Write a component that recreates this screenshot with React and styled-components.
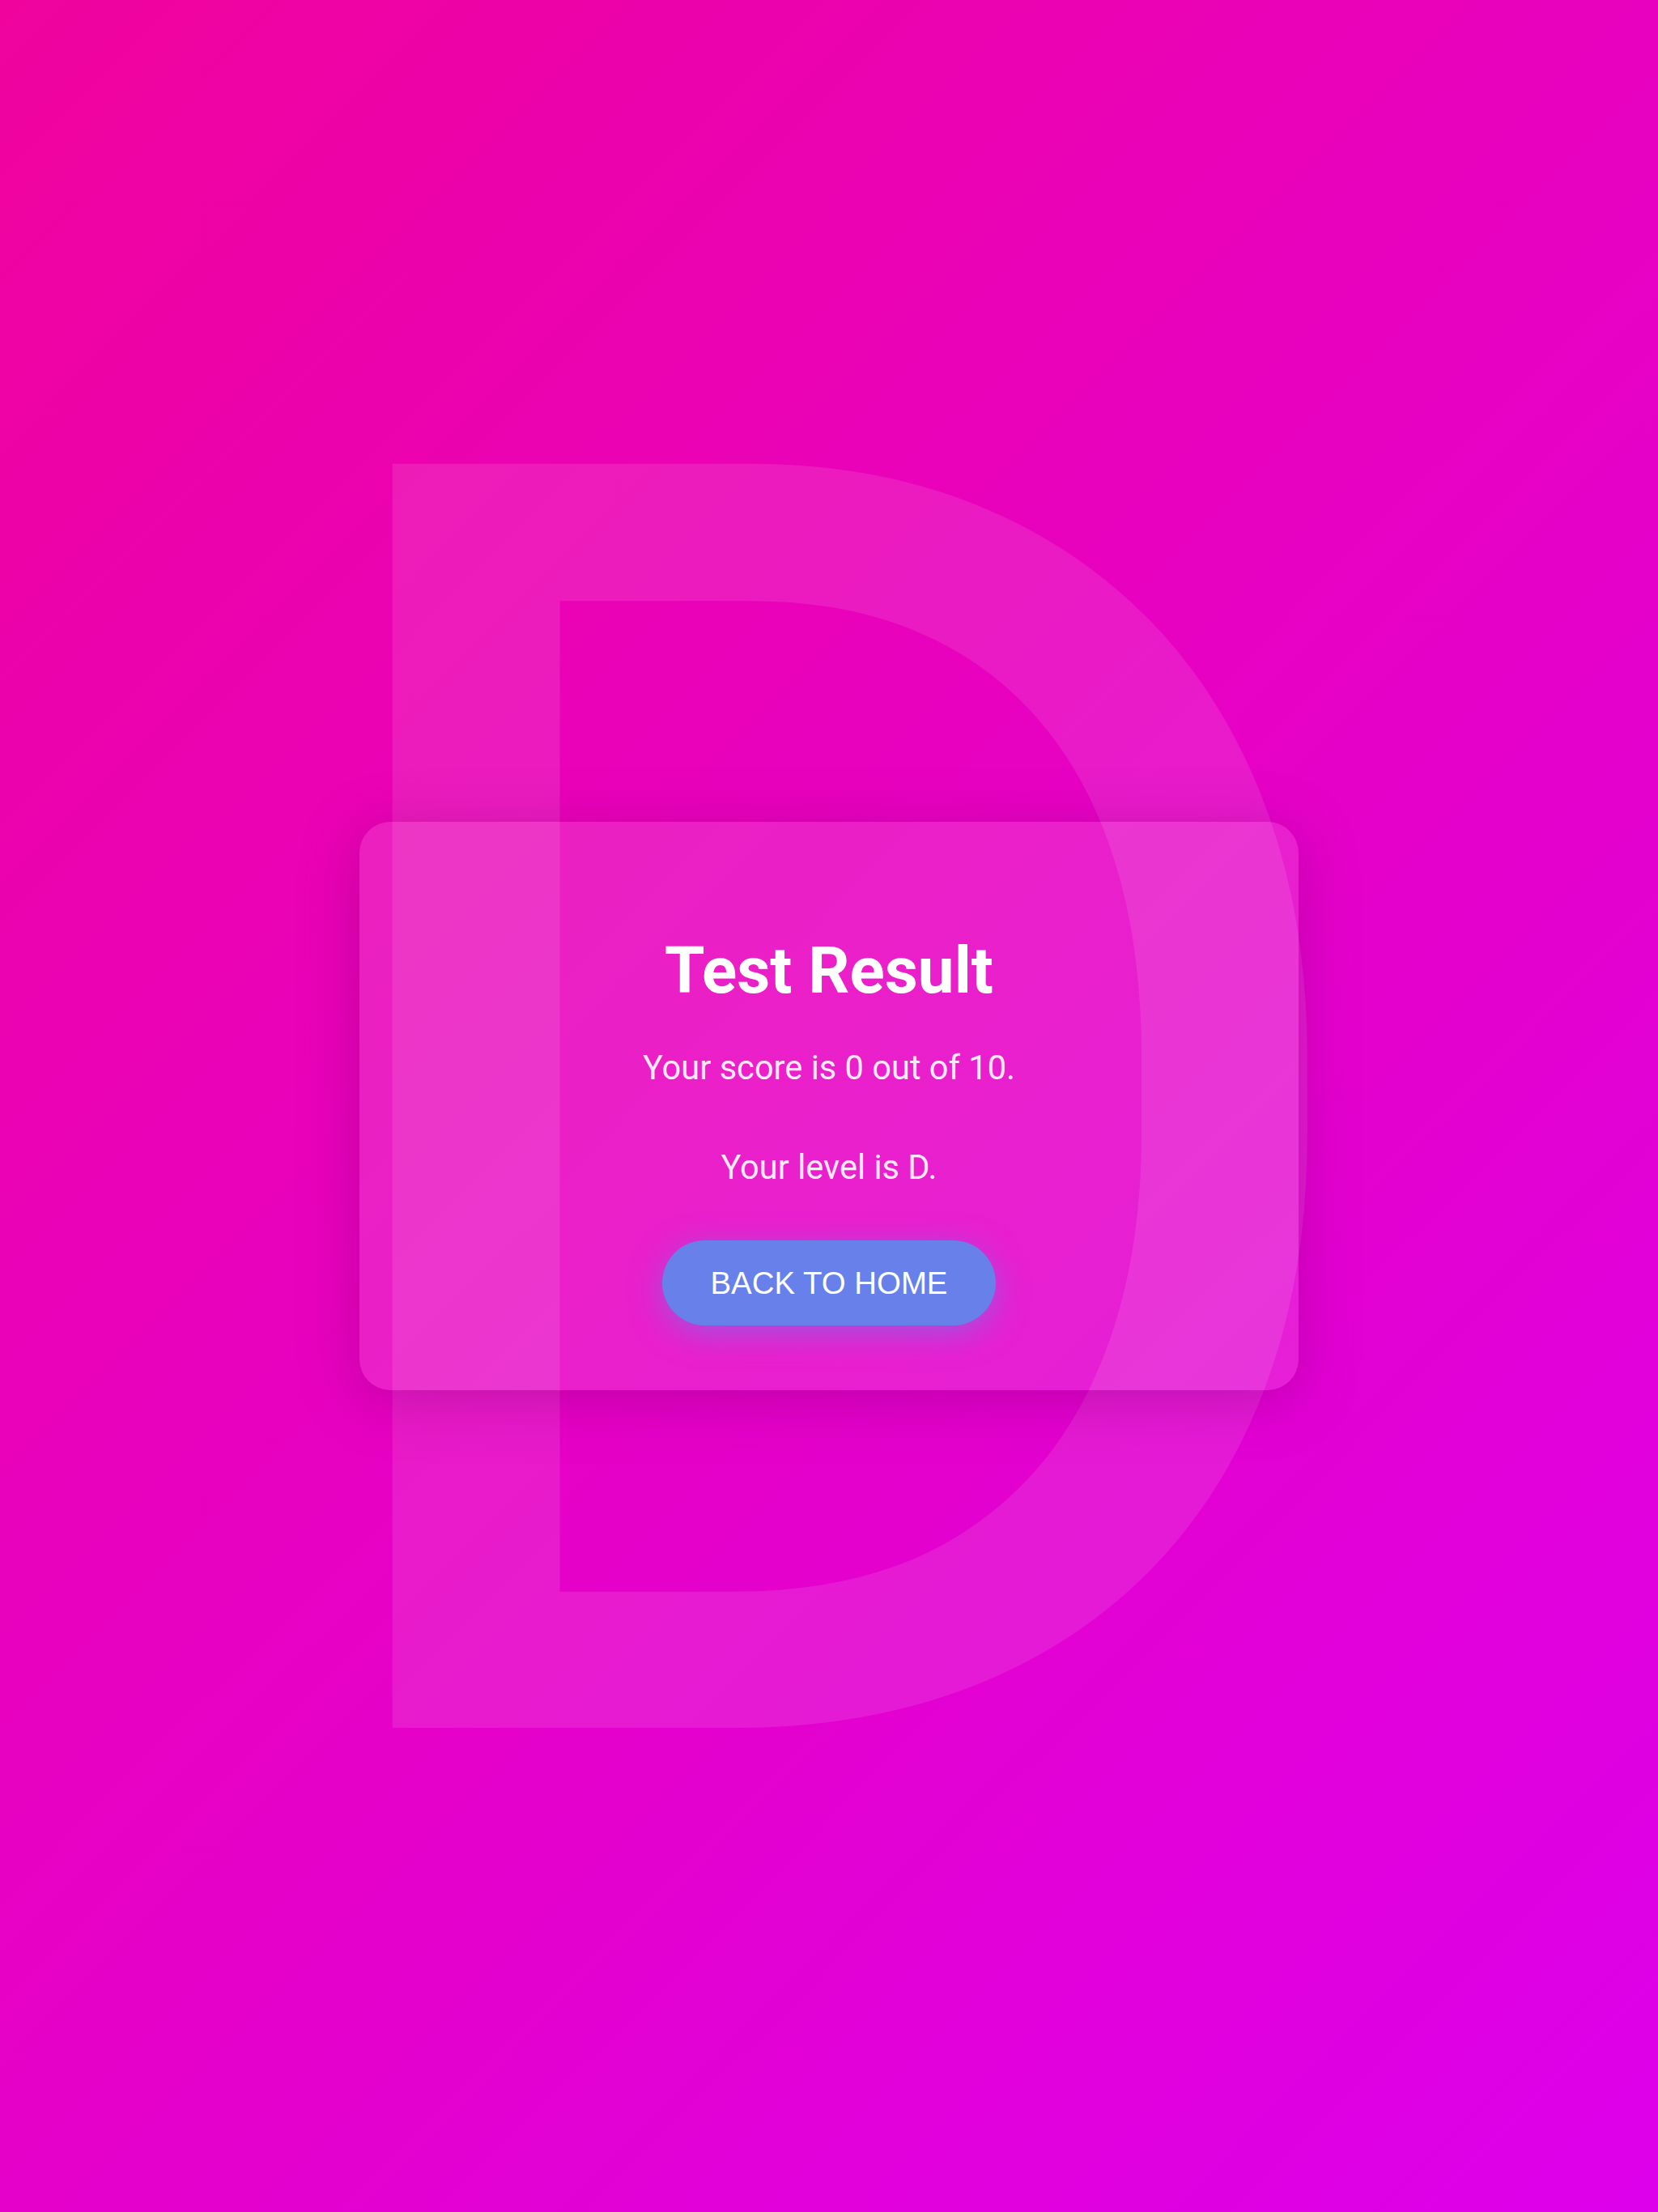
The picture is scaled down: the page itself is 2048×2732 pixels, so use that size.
import React from "react";
import styled, { createGlobalStyle } from "styled-components";

const Global = createGlobalStyle`
  html, body {
    margin: 0;
    padding: 0;
  }
  body {
    min-height: 100vh;
    background: linear-gradient(135deg, #f0039d 0%, #dd00eb 100%);
    font-family: Roboto, "Noto Sans", sans-serif;
    overflow: hidden;
  }
`;

const Page = styled.main`
  position: relative;
  min-height: 100vh;
  display: flex;
  align-items: center;
  justify-content: center;
`;

const Watermark = styled.div`
  position: absolute;
  inset: 0;
  display: flex;
  align-items: center;
  justify-content: center;
  padding-top: 36px;
  font-family: Roboto, sans-serif;
  font-weight: 400;
  font-size: 2196px;
  line-height: 1;
  color: rgba(255, 255, 255, 0.1);
  pointer-events: none;
  user-select: none;
`;

const Card = styled.section`
  position: relative;
  box-sizing: border-box;
  width: 1160px;
  height: 702px;
  padding: 137px 40px 0;
  display: flex;
  flex-direction: column;
  align-items: center;
  border-radius: 38px;
  background: rgba(255, 255, 255, 0.12);
  box-shadow: 0 12px 70px rgba(120, 0, 110, 0.35);
  text-align: center;
`;

const Title = styled.h1`
  margin: 0;
  font-family: Roboto, sans-serif;
  font-weight: 700;
  font-size: 80px;
  line-height: normal;
  color: #ffffff;
`;

const Line = styled.p`
  margin: ${(p) => p.$top}px 0 0;
  font-family: Roboto, sans-serif;
  font-weight: 400;
  font-size: 41.6px;
  line-height: normal;
  color: rgba(255, 255, 255, 0.92);
`;

const Button = styled.button`
  margin-top: 66px;
  box-sizing: border-box;
  width: 412px;
  height: 105px;
  border: none;
  border-radius: 999px;
  background: #6780ea;
  color: #ffffff;
  font-family: "Liberation Sans", Arial, sans-serif;
  font-size: 38.4px;
  text-transform: uppercase;
  box-shadow: 0 10px 38px rgba(102, 126, 234, 0.55);
  cursor: pointer;
`;

export default function App() {
  return (
    <>
      <Global />
      <Page>
        <Watermark aria-hidden="true">D</Watermark>
        <Card>
          <Title>Test Result</Title>
          <Line $top={48}>Your score is 0 out of 10.</Line>
          <Line $top={74}>Your level is D.</Line>
          <Button>Back to Home</Button>
        </Card>
      </Page>
    </>
  );
}
